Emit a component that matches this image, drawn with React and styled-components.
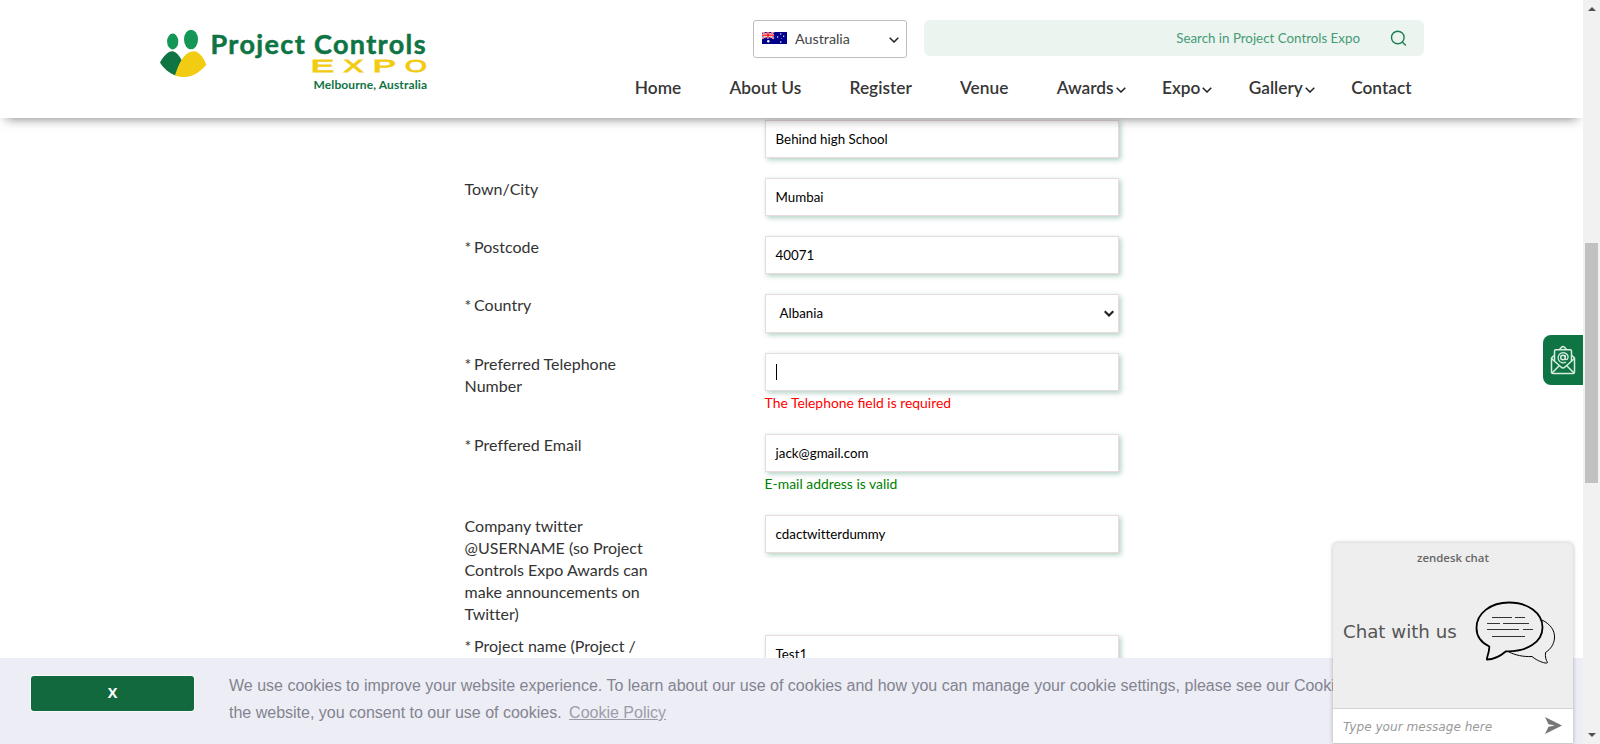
import React from "react";
import styled, { createGlobalStyle } from "styled-components";

const lato = `Lato, "Open Sans", sans-serif`;
const arial = `"Liberation Sans", Arial, sans-serif`;
const verdana = `"DejaVu Sans", Verdana, sans-serif`;

const GlobalStyle = createGlobalStyle`
  * { box-sizing: border-box; }
  body { margin: 0; background: #fff; font-family: ${lato}; overflow: hidden; }
`;

const Page = styled.div`
  display: grid;
  grid-template-columns: 1fr 17px;
  width: 1600px;
  height: 744px;
  overflow: hidden;
`;

const Main = styled.div`
  position: relative;
  display: flex;
  flex-direction: column;
  min-width: 0;
  height: 744px;
  overflow: hidden;
`;

const Header = styled.header`
  z-index: 2;
  flex: none;
  display: flex;
  justify-content: space-between;
  height: 118px;
  padding: 20px 159px 0 158px;
  background: #fff;
  box-shadow: 0 6px 11px -6px rgba(0, 0, 0, 0.56);
`;

const Logo = styled.svg`
  display: block;
  margin-top: 4px;
`;

const HeaderRight = styled.div`
  display: flex;
  flex-direction: column;
  align-items: flex-end;
`;

const Tools = styled.div`
  display: flex;
  align-items: flex-start;
  gap: 17px;
`;

const CountryPicker = styled.button`
  display: flex;
  align-items: center;
  width: 154px;
  height: 38px;
  padding: 0 7px 1px 8px;
  border: 1px solid #bdbdbd;
  border-radius: 3px;
  background: #fff;
  font: 400 14.3px ${lato};
  color: #444;
  span { flex: 1; margin-left: 8px; text-align: left; }
  svg:first-child { margin-top: -2px; }
  svg:last-child { margin-top: 3px; }
`;

const Search = styled.label`
  display: flex;
  align-items: center;
  width: 500px;
  height: 36px;
  padding-right: 17px;
  border-radius: 6px;
  background: #ebf4ef;
  input {
    flex: 1;
    min-width: 0;
    margin-right: 30px;
    padding: 0 0 1px;
    border: 0;
    outline: 0;
    background: transparent;
    text-align: right;
    font: 400 13.33px ${lato};
    color: #469b76;
  }
  input::placeholder { color: #469b76; opacity: 1; }
`;

const Nav = styled.nav`
  display: flex;
  gap: 48.3px;
  margin: 19px 12.5px 0 0;
`;

const NavItem = styled.a`
  display: flex;
  align-items: center;
  gap: 2px;
  height: 22px;
  margin-right: ${(p) => (p.$menu ? "-12px" : "0")};
  font-size: 17.3px;
  font-weight: 600;
  line-height: 22px;
  color: #363636;
  white-space: nowrap;
  svg { margin-top: 3px; }
`;

const Form = styled.form`
  flex: 1;
  min-height: 0;
  overflow: hidden;
  padding: 2px 0 0 464.6px;
`;

const Row = styled.div`
  display: grid;
  grid-template-columns: 300px 354px;
`;

const Label = styled.label`
  padding-bottom: 10px;
  font-size: 16px;
  line-height: 22px;
  color: #333;
  white-space: pre-line;
  font-variant-ligatures: none;
`;

const Star = styled.span`
  letter-spacing: -0.7px;
`;

const Field = styled.div`
  padding-bottom: 20px;
`;

const Box = styled.div`
  display: flex;
  align-items: center;
  justify-content: space-between;
  height: ${(p) => (p.$select ? "39px" : "38px")};
  padding: ${(p) => (p.$select ? "0 4px 1px 14px" : "0 10px")};
  border: 1px solid #e8dbde;
  background: #fff;
  box-shadow: 2px 2px 5px rgba(15, 116, 68, 0.32);
  font-size: 13.33px;
  color: #000;
  font-variant-ligatures: none;
`;

const Caret = styled.i`
  width: 1px;
  height: 16px;
  background: #000;
`;

const Message = styled.p`
  height: 23px;
  margin: 0;
  padding-top: 2px;
  font-size: 13.9px;
  line-height: 20px;
  color: ${(p) => (p.$valid ? "#008000" : "#ff0000")};
`;

const CookieBar = styled.section`
  flex: none;
  display: flex;
  gap: 35px;
  height: 86px;
  padding: 14px 0 0 31px;
  background: #edeef5;
  font: 400 16px/27px ${arial};
  color: #838391;
  white-space: nowrap;
  p { margin: 0; }
  a { margin-left: 3px; color: #9c9ca9; text-decoration: underline; }
`;

const Dismiss = styled.button`
  width: 163px;
  height: 35px;
  margin-top: 4px;
  padding: 0 0 2px;
  border: 0;
  border-radius: 3px;
  background: #11693d;
  box-shadow: 0 0 0 1px #f8f9fb;
  font: 700 14.4px "Open Sans", ${arial};
  color: #fff;
`;

const MailTab = styled.button`
  position: absolute;
  top: 335px;
  right: 0;
  display: flex;
  align-items: center;
  width: 40px;
  height: 50px;
  padding: 0 0 0 7px;
  border: 0;
  border-radius: 8px 0 0 8px;
  background: #0f7444;
`;

const Chat = styled.aside`
  position: absolute;
  z-index: 3;
  right: 10px;
  bottom: 0;
  display: flex;
  flex-direction: column;
  width: 240px;
  height: 201px;
  border-radius: 5px 5px 0 0;
  background: #eee;
  box-shadow: 0 0 4px rgba(0, 0, 0, 0.28);
  font-family: ${verdana};
`;

const ChatTitle = styled.h4`
  margin: 6px 0 0;
  font: 600 11.4px/18px "Open Sans", ${lato};
  text-align: center;
  color: #666;
`;

const ChatBody = styled.div`
  flex: 1;
  display: flex;
  align-items: center;
  justify-content: space-between;
  padding: 0 17px 9px 10px;
  font-size: 18.2px;
  color: #555;
  span { margin-top: -4px; }
`;

const ChatInput = styled.div`
  display: flex;
  align-items: center;
  justify-content: space-between;
  height: 36px;
  padding: 0 11px 0 10px;
  border-top: 1px solid #d6d6d6;
  border-bottom: 1px solid #ccc;
  background: #fff;
  font: italic 400 12.1px ${verdana};
  color: #9a9a9a;
  span { margin-top: 2px; }
  svg { margin-top: -1px; }
`;

const Scrollbar = styled.div`
  display: flex;
  flex-direction: column;
  align-items: center;
  justify-content: space-between;
  padding: 7px 0;
  background: #f1f1f1;
`;

const Thumb = styled.div`
  width: 13px;
  height: 240px;
  margin-bottom: 18px;
  background: #c1c1c1;
`;

const Chevron = ({ width = 10, height = 6, stroke = 1.5 }) => (
  <svg width={width} height={height} viewBox="0 0 10 6" fill="none" stroke="#222" strokeWidth={stroke}>
    <path d="M.7.7 5 5 9.300 .7" />
  </svg>
);

const ExpoLetter = ({ x, stretch, children }) => (
  <text transform={`translate(${x} 72.400) scale(${stretch} 1)`} fontFamily="Liberation Sans" fontSize="17" fill="#f2cb13" stroke="#f2cb13" strokeWidth=".9">
    {children}
  </text>
);

const Brand = () => (
  <Logo width="272" height="70" viewBox="158 24 272 70">
    <ellipse cx="172.700" cy="41.500" rx="5.600" ry="7.900" fill="#149657" />
    <ellipse cx="191" cy="39.500" rx="7" ry="9.800" fill="#149657" />
    <path d="M160 62.500C163.500 56 168 51.300 172.500 51.300 176 51.300 180 56.500 182 61L175.500 75.500C169 73 163 68 160 62.500Z" fill="#0f7444" />
    <path d="M175 75.500C178 67 183 51.300 194 51.300 199 51.300 204 58 206.300 65 199 73 192 77 185 77 181.500 77 178 76.500 175 75.500Z" fill="#f2cb13" />
    <text x="210.500" y="53.500" textLength="215" fontFamily="Lato" fontWeight="700" fontSize="27" fill="#0f7444" stroke="#0f7444" strokeWidth=".5" strokeLinejoin="round">Project Controls</text>
    <ExpoLetter x="310.800" stretch="2.050">E</ExpoLetter>
    <ExpoLetter x="343.800" stretch="1.720">X</ExpoLetter>
    <ExpoLetter x="372.800" stretch="2.050">P</ExpoLetter>
    <ExpoLetter x="405.100" stretch="1.650">O</ExpoLetter>
    <text x="313.500" y="88.500" textLength="113.500" fontFamily="Lato" fontWeight="700" fontSize="12" fill="#0f7444">Melbourne, Australia</text>
  </Logo>
);

const Flag = () => (
  <svg width="25" height="12" viewBox="0 0 25 12">
    <rect width="25" height="12" fill="#00008b" />
    <path d="M0 0 12 6.500M12 0 0 6.500" stroke="#fff" strokeWidth="1.600" />
    <path d="M0 0 12 6.500M12 0 0 6.500" stroke="#f33" strokeWidth=".8" />
    <path d="M6 0V6.500M0 3.200H12" stroke="#fff" strokeWidth="2.400" />
    <path d="M6 0V6.500M0 3.200H12" stroke="#f00" strokeWidth="1.300" />
    <g fill="#fff">
      <circle cx="6.300" cy="9.200" r="1.200" />
      <circle cx="18.700" cy="2" r=".7" />
      <circle cx="15.700" cy="5" r=".7" />
      <circle cx="21.700" cy="4.300" r=".7" />
      <circle cx="19.800" cy="6.500" r=".4" />
      <circle cx="18.700" cy="10" r=".8" />
    </g>
  </svg>
);

const SearchIcon = () => (
  <svg width="17" height="17" viewBox="0 0 17 17" fill="none" stroke="#1b7d50" strokeWidth="1.400">
    <circle cx="7.800" cy="7.500" r="6.300" />
    <path d="m12.300 12 3.500 3.600" />
  </svg>
);

const MailIcon = () => (
  <svg width="27" height="30" viewBox="0 0 27 30" fill="none" stroke="#d9ece2" strokeWidth="1.500" strokeLinejoin="round">
    <path d="M4.500 16V6Q4.500 4.800 5.700 4.800H20.300Q21.500 4.800 21.500 6V16" />
    <path d="M9.500 4.500 11.500 2.300Q13 1 14.500 2.300L16.500 4.500" />
    <path d="M4 10.500 1.500 13V27Q1.500 28.500 3 28.500H23Q24.500 28.500 24.500 27V13L22 10.500" />
    <path d="M1.500 13.500 11 22Q13 24 15 22L24.500 13.500M2 28 9.500 20.500M24 28 16.500 20.500" />
    <circle cx="13" cy="12.500" r="2.300" />
    <path d="M15.300 10V13.500Q15.500 15 17 14.500 18.500 13 18 11A5.100 5.100 0 1 0 16 17" strokeWidth="1.300" />
  </svg>
);

const Bubbles = () => (
  <svg width="81" height="64" viewBox="0 0 81 64" fill="none" stroke="#000">
    <path d="M67 19C75 23 80 29 79.500 37 79 43 76 48 70.500 51.500 70 56 71 59 72.500 61.500 72 63.500 62 60 57 55.500 48 56 40 54 34 51" strokeWidth="1" />
    <path d="M34 1.500C53 1.500 67.500 12 67.500 26.500 67.500 41 52 51 31 50.300 25 55.500 19 58.500 12 58.500 11 57.500 14.500 52 14.300 45.500 6 41.500 1.500 35 1.500 27 1.500 12 16 1.500 34 1.500Z" fill="#eee" strokeWidth="1.800" />
    <path d="M17 16.500H37M40 16.500H50M12 22.500H25M28 22.500H54M12 28.500H44M48 28.500H58M17 35.500H50" stroke="#333" strokeWidth="1.200" />
  </svg>
);

const NAV = [
  ["Home"], ["About Us"], ["Register"], ["Venue"],
  ["Awards", true], ["Expo", true], ["Gallery", true], ["Contact"],
];

const FIELDS = [
  { label: "", value: "Behind high School" },
  { label: "Town/City", value: "Mumbai" },
  { label: "Postcode", required: true, value: "40071" },
  { label: "Country", required: true, value: "Albania", select: true },
  { label: "Preferred Telephone\nNumber", required: true, focused: true, message: "The Telephone field is required" },
  { label: "Preffered Email", required: true, value: "jack@gmail.com", message: "E-mail address is valid", valid: true },
  { label: "Company twitter\n@USERNAME (so Project\nControls Expo Awards can\nmake announcements on\nTwitter)", value: "cdactwitterdummy" },
  { label: "Project name (Project /", required: true, value: "Test1" },
];

export default function App() {
  return (
    <Page>
      <GlobalStyle />
      <Main>
        <Header>
          <Brand />
          <HeaderRight>
            <Tools>
              <CountryPicker>
                <Flag />
                <span>Australia</span>
                <Chevron />
              </CountryPicker>
              <Search>
                <input placeholder="Search in Project Controls Expo" />
                <SearchIcon />
              </Search>
            </Tools>
            <Nav>
              {NAV.map(([name, menu]) => (
                <NavItem key={name} $menu={menu}>
                  {name}
                  {menu && <Chevron />}
                </NavItem>
              ))}
            </Nav>
          </HeaderRight>
        </Header>
        <Form>
          {FIELDS.map((f) => (
            <Row key={f.label}>
              <Label>
                {f.required && <Star>* </Star>}
                {f.label}
              </Label>
              <Field>
                <Box $select={f.select}>
                  {f.focused ? <Caret /> : f.value}
                  {f.select && <Chevron width={10} height={7} stroke={2.2} />}
                </Box>
                {f.message && <Message $valid={f.valid}>{f.message}</Message>}
              </Field>
            </Row>
          ))}
        </Form>
        <CookieBar>
          <Dismiss>X</Dismiss>
          <p>
            We use cookies to improve your website experience. To learn about our use of cookies and how you can manage your cookie settings, please see our Cookie Policy. By continuing to use
            <br />
            the website, you consent to our use of cookies. <a>Cookie Policy</a>
          </p>
        </CookieBar>
        <MailTab aria-label="Mail">
          <MailIcon />
        </MailTab>
        <Chat>
          <ChatTitle>zendesk chat</ChatTitle>
          <ChatBody>
            <span>Chat with us</span>
            <Bubbles />
          </ChatBody>
          <ChatInput>
            <span>Type your message here</span>
            <svg width="17" height="17" viewBox="0 0 17 17">
              <path d="M0 0 17 8.500 0 17 3.500 9.700 10 8.500 3.500 7.300Z" fill="#777" />
            </svg>
          </ChatInput>
        </Chat>
      </Main>
      <Scrollbar>
        <svg width="8" height="4"><path d="M0 4 4 0 8 4Z" fill="#505050" /></svg>
        <Thumb />
        <svg width="8" height="4"><path d="M0 0H8L4 4Z" fill="#505050" /></svg>
      </Scrollbar>
    </Page>
  );
}
